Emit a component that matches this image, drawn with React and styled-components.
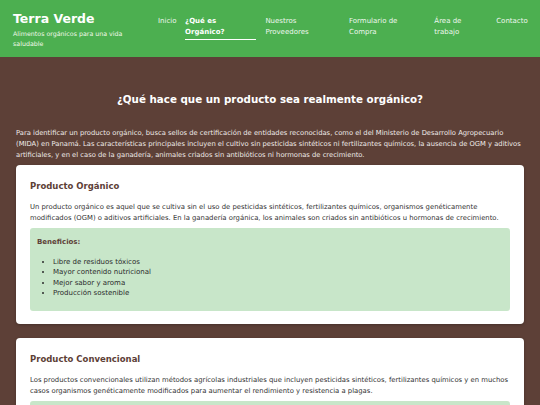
import React from "react";
import styled, { createGlobalStyle } from "styled-components";

const colors = {
  green: "#4caf50",
  brown: "#5d4037",
  lightGreen: "#c8e6c9",
  text: "#333333",
};

const GlobalStyle = createGlobalStyle`
  * { box-sizing: border-box; }
  body {
    margin: 0;
    background-color: ${colors.brown};
    font-family: "DejaVu Sans", Verdana, sans-serif;
  }
`;

const Header = styled.header`
  background-color: ${colors.green};
  display: flex;
  align-items: flex-start;
  padding: 10px 13px 8px 13px;
  gap: 10px;
`;

const Brand = styled.div`
  flex: 0 0 135px;
`;

const Logo = styled.h1`
  margin: 0;
  color: white;
  font-size: 12.5px;
  line-height: 17px;
  font-weight: 700;
`;

const Tagline = styled.p`
  margin: 2px 0 0;
  color: #f1f8e9;
  font-size: 6.3px;
  line-height: 10px;
  max-width: 115px;
`;

const Nav = styled.nav`
  flex: 1;
  display: flex;
  gap: 9px;
  padding-top: 6px;
`;

const NavItem = styled.a`
  flex: 1 1 auto;
  min-width: 0;
  color: ${(p) => (p.$active ? "white" : "#eef7ee")};
  font-weight: ${(p) => (p.$active ? 700 : 400)};
  font-size: 7px;
  line-height: 11px;
  text-decoration: none;

  span {
    display: inline-block;
    border-bottom: ${(p) => (p.$active ? "1.5px solid white" : "none")};
    padding-bottom: 1px;
  }
`;

const Main = styled.main`
  padding: 34px 16px 16px;
`;

const Heading = styled.h2`
  margin: 0 0 21px;
  text-align: center;
  color: white;
  font-size: 10.3px;
  line-height: 16px;
  font-weight: 700;
`;

const Intro = styled.p`
  margin: 0 0 4px;
  color: #efebe9;
  font-size: 6.77px;
  line-height: 11px;
`;

const Card = styled.section`
  background: white;
  border-radius: 4px;
  padding: 15px 14px 13px;
  margin-bottom: 14px;
  box-shadow: 0 1px 3px rgba(0, 0, 0, 0.25);
`;

const CardTitle = styled.h3`
  margin: 0 0 10px;
  color: ${colors.brown};
  font-size: 8.5px;
  line-height: 12px;
  font-weight: 700;
`;

const CardText = styled.p`
  margin: 0 0 4px;
  color: ${colors.text};
  font-size: 6.85px;
  line-height: 11px;
`;

const InfoBox = styled.div`
  background: ${colors.lightGreen};
  border-radius: 3px;
  padding: 9px 7px 12px;
  min-height: ${(p) => p.$minHeight || 0}px;
`;

const InfoTitle = styled.h4`
  margin: 0 0 9px;
  color: ${colors.brown};
  font-size: 7px;
  line-height: 11px;
  font-weight: 700;
`;

const List = styled.ul`
  margin: 0;
  padding-left: 16px;
  color: #2b2b2b;
  font-size: 7px;
  line-height: 10.4px;
`;

const navLinks = [
  { label: "Inicio" },
  { label: "¿Qué es Orgánico?", active: true },
  { label: "Nuestros Proveedores" },
  { label: "Formulario de Compra" },
  { label: "Área de trabajo" },
  { label: "Contacto" },
];

const benefits = [
  "Libre de residuos tóxicos",
  "Mayor contenido nutricional",
  "Mejor sabor y aroma",
  "Producción sostenible",
];

const App = () => {
  return (
    <>
      <GlobalStyle />
      <Header>
        <Brand>
          <Logo>Terra Verde</Logo>
          <Tagline>Alimentos orgánicos para una vida saludable</Tagline>
        </Brand>
        <Nav>
          {navLinks.map((link) => (
            <NavItem key={link.label} href="#" $active={link.active}>
              <span>{link.label}</span>
            </NavItem>
          ))}
        </Nav>
      </Header>
      <Main>
        <Heading>¿Qué hace que un producto sea realmente orgánico?</Heading>
        <Intro>
          Para identificar un producto orgánico, busca sellos de certificación de
          entidades reconocidas, como el del Ministerio de Desarrollo Agropecuario
          (MIDA) en Panamá. Las características principales incluyen el cultivo
          sin pesticidas sintéticos ni fertilizantes químicos, la ausencia de OGM
          y aditivos artificiales, y en el caso de la ganadería, animales criados
          sin antibióticos ni hormonas de crecimiento.
        </Intro>
        <Card>
          <CardTitle>Producto Orgánico</CardTitle>
          <CardText>
            Un producto orgánico es aquel que se cultiva sin el uso de pesticidas
            sintéticos, fertilizantes químicos, organismos genéticamente
            modificados (OGM) o aditivos artificiales. En la ganadería orgánica,
            los animales son criados sin antibióticos u hormonas de crecimiento.
          </CardText>
          <InfoBox>
            <InfoTitle>Beneficios:</InfoTitle>
            <List>
              {benefits.map((b) => (
                <li key={b}>{b}</li>
              ))}
            </List>
          </InfoBox>
        </Card>
        <Card>
          <CardTitle>Producto Convencional</CardTitle>
          <CardText>
            Los productos convencionales utilizan métodos agrícolas industriales
            que incluyen pesticidas sintéticos, fertilizantes químicos y en muchos
            casos organismos genéticamente modificados para aumentar el
            rendimiento y resistencia a plagas.
          </CardText>
          <InfoBox $minHeight={80} />
        </Card>
      </Main>
    </>
  );
};

export default App;
